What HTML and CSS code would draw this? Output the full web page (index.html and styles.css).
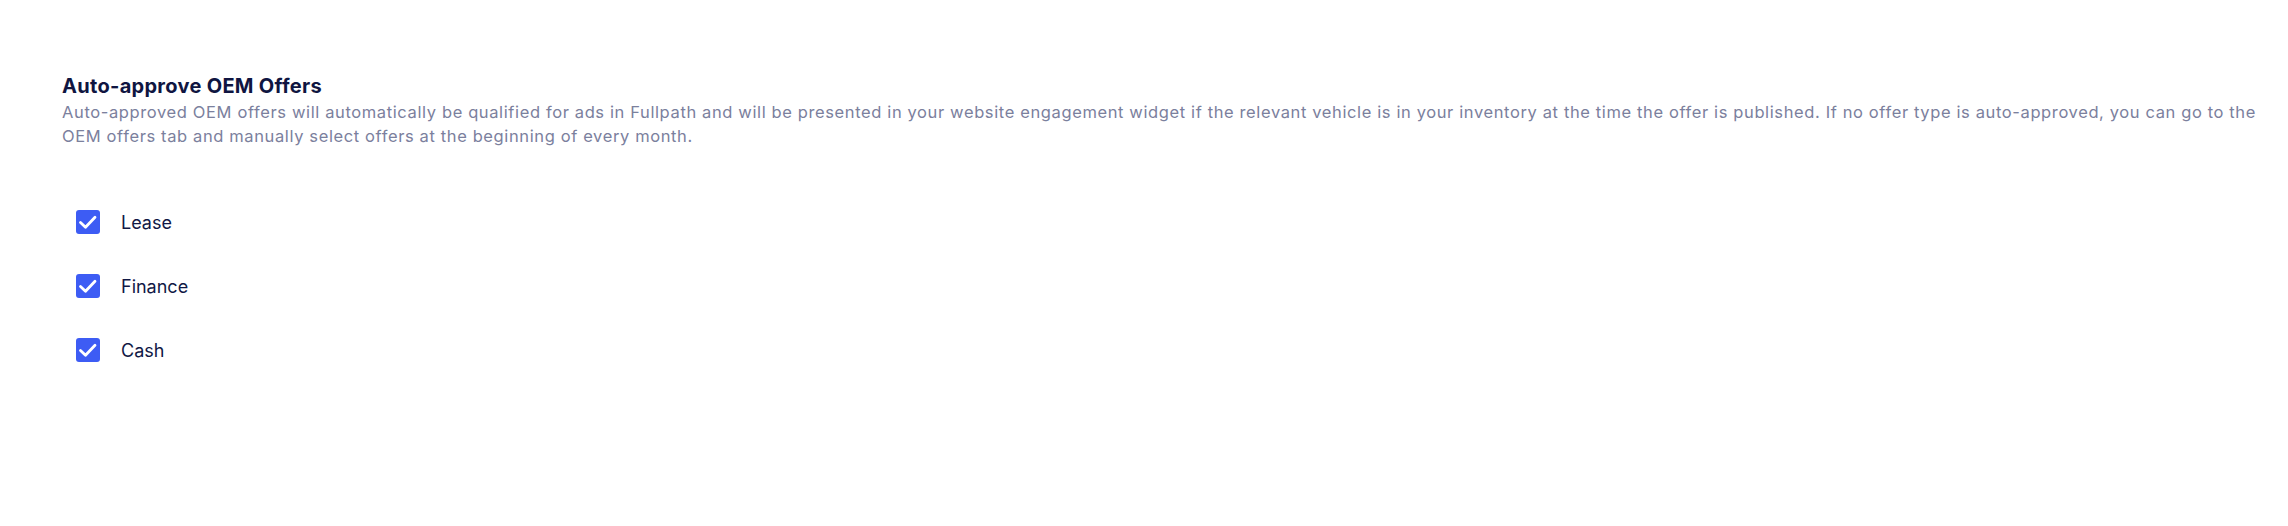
FILE: index.html
```html
<!DOCTYPE html>
<html>
<head>
<meta charset="utf-8">
<link rel="stylesheet" href="styles.css">
</head>
<body>
<section class="settings">
  <div class="header">
    <h2 class="title">Auto-approve OEM Offers</h2>
    <p class="desc">Auto-approved OEM offers will automatically be qualified for ads in Fullpath and will be presented in your website engagement widget if the relevant vehicle is in your inventory at the time the offer is published. If no offer type is auto-approved, you can go to the OEM offers tab and manually select offers at the beginning of every month.</p>
  </div>
  <div class="options">
    <label class="option">
      <span class="box"><svg viewBox="0 0 24 24" width="24" height="24"><path d="M4.5 12.5l5 4.8 9.5-10" fill="none" stroke="#fff" stroke-width="2.8" stroke-linecap="round" stroke-linejoin="round"/></svg></span>
      <span class="label">Lease</span>
    </label>
    <label class="option">
      <span class="box"><svg viewBox="0 0 24 24" width="24" height="24"><path d="M4.5 12.5l5 4.8 9.5-10" fill="none" stroke="#fff" stroke-width="2.8" stroke-linecap="round" stroke-linejoin="round"/></svg></span>
      <span class="label">Finance</span>
    </label>
    <label class="option">
      <span class="box"><svg viewBox="0 0 24 24" width="24" height="24"><path d="M4.5 12.5l5 4.8 9.5-10" fill="none" stroke="#fff" stroke-width="2.8" stroke-linecap="round" stroke-linejoin="round"/></svg></span>
      <span class="label">Cash</span>
    </label>
  </div>
</section>
</body>
</html>
```
FILE: styles.css
```css
html, body {
  margin: 0;
  padding: 0;
  background: #ffffff;
}
.settings {
  padding: 72px 20px 0 62px;
  font-family: Inter, "Noto Sans", sans-serif;
}
.header {
  display: flex;
  flex-direction: column;
}
.title {
  margin: 0;
  font-size: 20px;
  line-height: 28px;
  font-weight: 700;
  color: #0f1541;
  letter-spacing: 0.3px;
}
.desc {
  margin: 0;
  font-size: 16.5px;
  line-height: 24px;
  color: #7b809d;
  letter-spacing: 0.62px;
}
.options {
  display: flex;
  flex-direction: column;
  gap: 40px;
  padding: 62px 0 0 14px;
}
.option {
  display: flex;
  align-items: center;
  gap: 21px;
}
.box {
  width: 24px;
  height: 24px;
  border-radius: 3px;
  background: #3d5cf4;
  display: flex;
}
.label {
  font-size: 18px;
  color: #101845;
}
```
